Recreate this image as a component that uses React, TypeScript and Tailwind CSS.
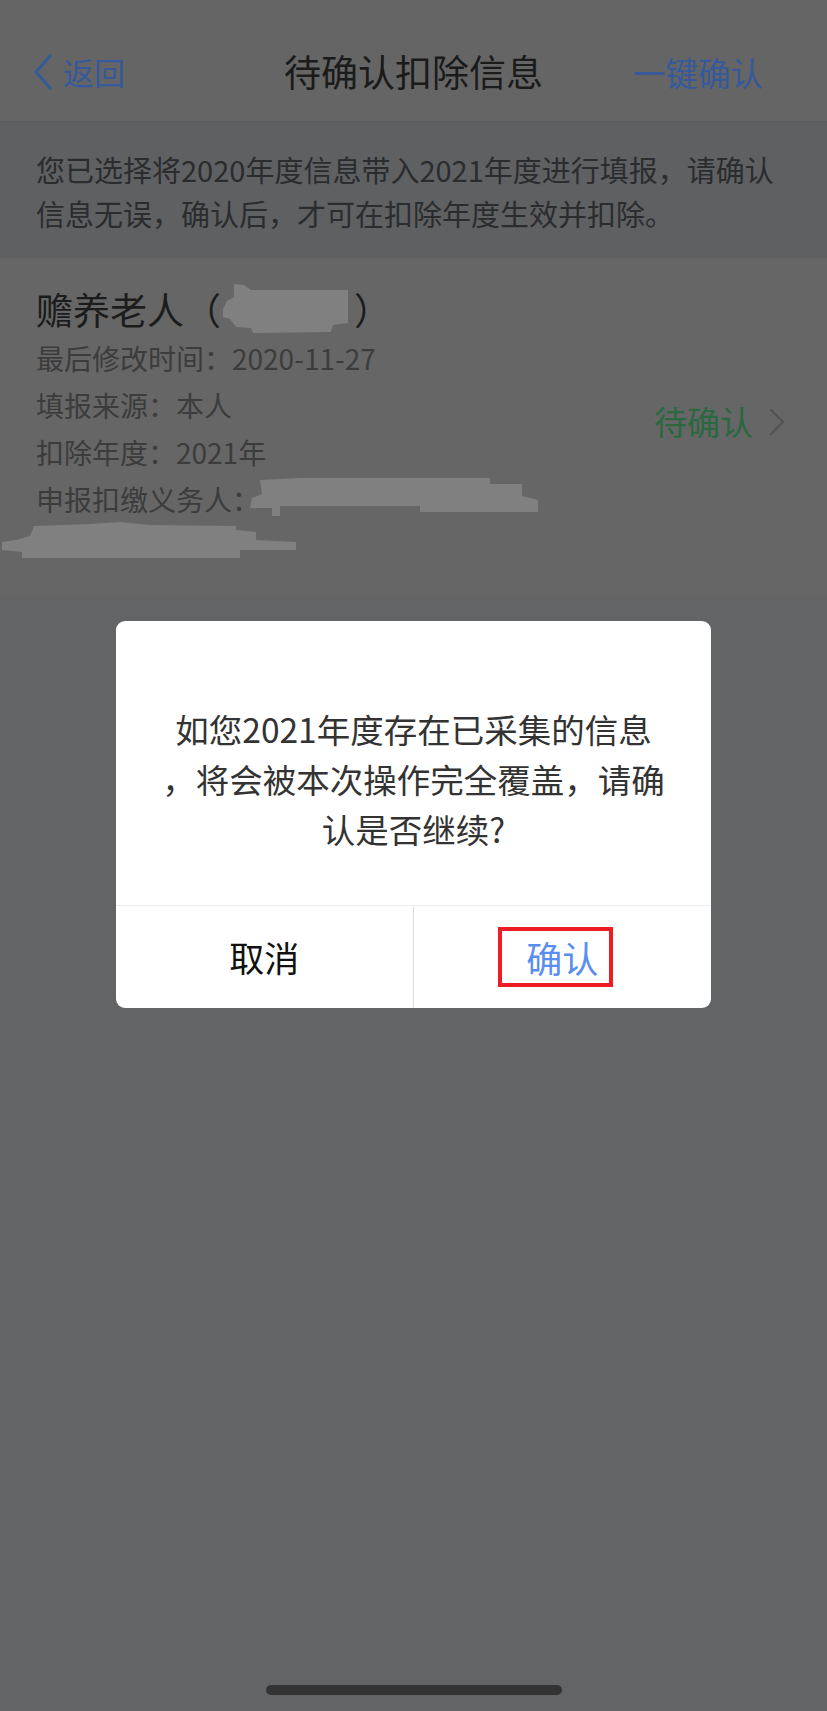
import React from "react";

const font = { fontFamily: '"Noto Sans CJK SC", "Noto Sans", sans-serif' };

function BackChevron() {
  return (
    <svg width="22" height="36" viewBox="0 0 22 36" fill="none" className="shrink-0">
      <path d="M18 2 L4 18 L18 34" stroke="#36599b" strokeWidth="3.2" strokeLinecap="round" strokeLinejoin="round" />
    </svg>
  );
}

function NameBlob() {
  return (
    <svg width="137" height="52" viewBox="0 0 137 52" className="inline-block align-middle">
      <path
        d="M2 26 L6 18 L13 14 L13 1 L23 2 L30 7 L127 7 L127 40 L112 42 L110 49 L32 50 L30 45 L15 44 L9 36 L2 34 Z"
        fill="#808080"
      />
    </svg>
  );
}

function Redactions() {
  return (
    <svg width="827" height="100" viewBox="0 0 827 100" className="pointer-events-none absolute left-0 top-[212px]">
      <path
        d="M260 10 L300 8 L400 8 L490 8 L490 14 L522 14 L522 26 L538 30 L538 42 L420 42 L420 36 L280 36 L280 46 L272 46 L272 38 L250 38 L252 28 L262 24 Z"
        fill="#808080"
      />
      <path
        d="M34 56 L90 54 L120 52 L150 55 L236 56 L236 60 L256 62 L256 70 L296 72 L296 80 L240 80 L240 88 L22 88 L22 82 L2 80 L2 72 L16 70 L30 66 Z"
        fill="#808080"
      />
    </svg>
  );
}

export default function App() {
  const details = ["最后修改时间：2020-11-27", "填报来源：本人", "扣除年度：2021年", "申报扣缴义务人："];

  return (
    <div className="relative flex h-[1711px] w-full flex-col bg-[#636466]" style={font}>
      {/* nav bar */}
      <header className="border-b border-[#5a5a5b] bg-[#656565] pb-[21px] pt-[44px]">
        <div className="grid h-[56px] grid-cols-[1fr_auto_1fr] items-center">
          <div className="flex items-center gap-[9px] pl-[32px] text-[31px] text-[#36599b]">
            <BackChevron />
            <span>返回</span>
          </div>
          <h1 className="text-[37px] font-normal text-[#1b1b1b]">待确认扣除信息</h1>
          <div className="flex justify-end pr-[64px] text-[32.5px] text-[#36599b]">一键确认</div>
        </div>
      </header>

      {/* notice */}
      <div className="bg-[#5f6062] px-[36px] pb-[23px] pt-[25px] text-[29px] leading-[44px] text-[#2b2c2e]">
        <p>您已选择将2020年度信息带入2021年度进行填报，请确认</p>
        <p>信息无误，确认后，才可在扣除年度生效并扣除。</p>
      </div>

      {/* card */}
      <div className="relative flex items-center bg-[#666666] pb-[27px] pl-[36px] pr-[42px] pt-[25px]">
        <div className="flex-1">
          <div className="flex items-center text-[37px] leading-[48px] text-[#1c1c1c]">
            <span>赡养老人（</span>
            <NameBlob />
            <span className="-ml-[4px]">）</span>
          </div>
          {details.map((d) => (
            <div key={d} className="text-[28px] leading-[47px] text-[#3c3c3c]">
              {d}
            </div>
          ))}
          <div className="h-[47px]" />
        </div>
        <div className="mb-[10px] flex items-center gap-[16px]">
          <span className="text-[33px] text-[#2a6840]">待确认</span>
          <svg width="16" height="28" viewBox="0 0 16 28" fill="none">
            <path d="M2 2 L14 14 L2 26" stroke="#525252" strokeWidth="2.2" strokeLinecap="round" strokeLinejoin="round" />
          </svg>
        </div>
        <Redactions />
      </div>

      <div className="flex-1" />
      <div className="flex justify-center pb-[16px]">
        <div className="h-[10px] w-[296px] rounded-full bg-[#333333]" />
      </div>

      {/* dialog */}
      <div className="absolute inset-0 flex justify-center pt-[621px]">
        <div className="h-fit w-[595px] overflow-hidden rounded-[9px] bg-white">
          <div className="pb-[51px] pt-[83px] text-center text-[33.5px] leading-[50px] text-[#333333]">
            <p>如您2021年度存在已采集的信息</p>
            <p>，将会被本次操作完全覆盖，请确</p>
            <p>认是否继续?</p>
          </div>
          <div className="grid h-[103px] grid-cols-2 border-t border-[#ececec]">
            <button type="button" className="border-r border-[#dddddd] text-[35px] text-[#111111]">
              取消
            </button>
            <button type="button" className="flex items-center justify-center">
              <span className="mr-[13px] border-4 border-[#ee1c25] pl-[24px] pr-[11px] text-[36px] leading-[52px] text-[#5a8df0]">
                确认
              </span>
            </button>
          </div>
        </div>
      </div>
    </div>
  );
}
